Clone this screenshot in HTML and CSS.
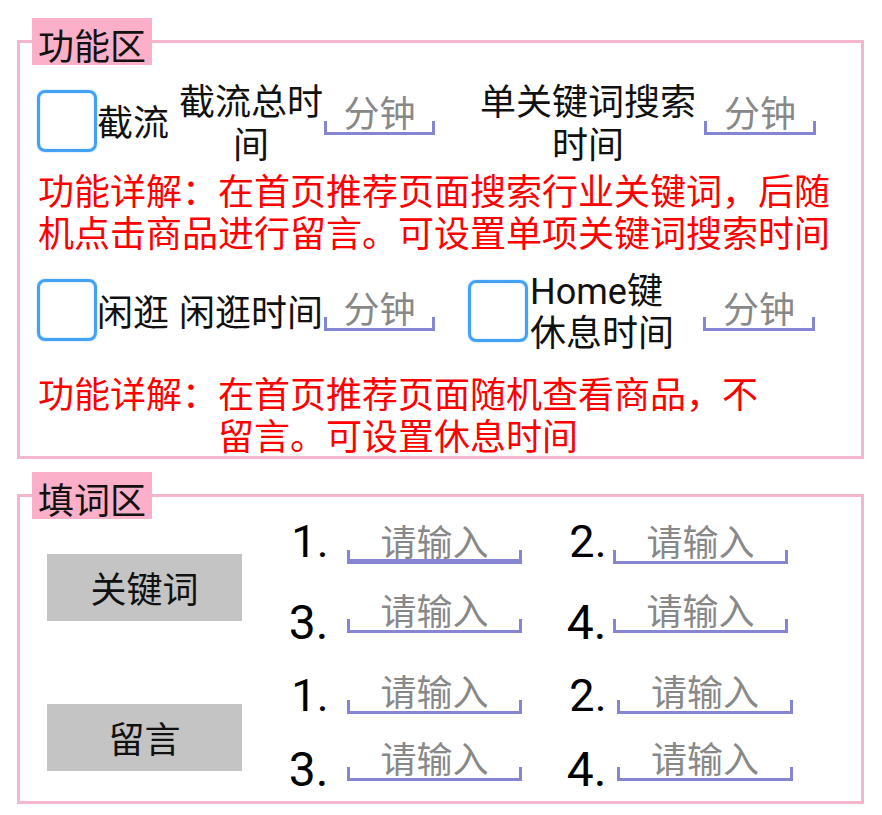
FILE: index.html
```html
<!DOCTYPE html>
<html lang="zh-CN">
<head>
<meta charset="utf-8">
<title>功能区</title>
<link rel="stylesheet" href="styles.css">
</head>
<body>
<div class="page">
  <fieldset class="panel panel-func">
    <legend class="legend">功能区</legend>
    <div class="row row-1">
      <span class="checkbox cb-r1"></span>
      <span class="label lbl-r1">截流</span>
      <span class="label block block-total">截流总时间</span>
      <span class="field field-min fm-r1">分钟</span>
      <span class="label block block-wide">单关键词搜索时间</span>
      <span class="field field-min fm-r1 fm-right">分钟</span>
    </div>
    <p class="desc">功能详解：在首页推荐页面搜索行业关键词，后随机点击商品进行留言。可设置单项关键词搜索时间</p>
    <div class="row row-2">
      <span class="checkbox cb-r2"></span>
      <span class="label lbl-r2">闲逛</span>
      <span class="label block block-total lbl-r2">闲逛时间</span>
      <span class="field field-min fm-r2">分钟</span>
      <span class="checkbox cb-home"></span>
      <span class="label home">Home键休息时间</span>
      <span class="field field-min fm-r2 fm-right2">分钟</span>
    </div>
    <div class="desc desc-split">
      <span class="desc-label">功能详解：</span>
      <span class="desc-body">在首页推荐页面随机查看商品，不留言。可设置休息时间</span>
    </div>
  </fieldset>

  <fieldset class="panel panel-words">
    <legend class="legend">填词区</legend>
    <div class="group">
      <div class="btn">关键词</div>
      <div class="grid grid-1">
        <div class="cell"><span class="num num-a n-g1r1">1.</span><span class="field field-word focused">请输入</span></div>
        <div class="cell"><span class="num num-a n-g1r1">2.</span><span class="field field-word second">请输入</span></div>
        <div class="cell"><span class="num num-b n-g1r2">3.</span><span class="field field-word">请输入</span></div>
        <div class="cell"><span class="num num-b n-g1r2">4.</span><span class="field field-word second">请输入</span></div>
      </div>
    </div>
    <div class="group group-2">
      <div class="btn">留言</div>
      <div class="grid grid-2">
        <div class="cell"><span class="num num-a n-g2r1">1.</span><span class="field field-word">请输入</span></div>
        <div class="cell"><span class="num num-a n-g2r1">2.</span><span class="field field-word second wide2">请输入</span></div>
        <div class="cell"><span class="num num-b n-g2r2">3.</span><span class="field field-word">请输入</span></div>
        <div class="cell"><span class="num num-b n-g2r2">4.</span><span class="field field-word second wide2">请输入</span></div>
      </div>
    </div>
  </fieldset>
</div>
</body>
</html>
```

FILE: styles.css
```css
* { box-sizing: border-box; }
html, body { margin: 0; background: #fff; }
body {
  font-family: "Noto Sans CJK SC", sans-serif;
  font-size: 36px;
  color: #111;
}
.page { padding: 18px 18px 0 17px; }

.panel {
  margin: 0;
  padding: 0 12px 1px;
  border: 3px solid #f3b6cb;
  min-inline-size: 0;
}
.panel + .panel { margin-top: 13px; }
.panel-words { padding-bottom: 20px; }

.legend {
  margin: 0;
  padding: 5px 6px 0;
  height: 47px;
  line-height: 42px;
  background: #fbafc8;
  color: #111;
}

.row { display: flex; align-items: flex-start; }
.row-1 { margin-top: 13px; height: 86px; }
.row-2 { margin-top: 19px; height: 84px; }

.checkbox {
  flex: none;
  width: 60px;
  height: 62px;
  margin-left: 5px;
  border: 3px solid #44a2f5;
  border-radius: 8px;
  box-shadow: 0 0 1.5px rgba(68, 162, 245, 0.7), inset 0 0 1.5px rgba(68, 162, 245, 0.7);
}
.cb-r1 { margin-top: 12px; }
.cb-r2 { margin-top: 8px; }
.cb-home { margin-top: 9px; margin-left: 33px; }

.label { flex: none; line-height: 43px; white-space: nowrap; }
.lbl-r1 { width: 72px; margin-top: 21px; }
.lbl-r2 { margin-top: 18px; }
.row-2 .lbl-r2:first-of-type { width: 72px; }
.block { white-space: normal; text-align: center; }
.block-total { width: 146px; margin-left: 9px; }
.block-wide { width: 218px; margin-left: 44px; }

.home {
  font-family: Roboto, "Noto Sans CJK SC", sans-serif;
  white-space: normal;
  width: 150px;
  margin-left: 2px;
  line-height: 42px;
}

.field {
  --line: #8585d3;
  flex: none;
  height: 45px;
  line-height: 43px;
  text-align: center;
  color: #888;
  white-space: nowrap;
  background:
    linear-gradient(var(--line), var(--line)) left bottom / 3px 14px no-repeat,
    linear-gradient(var(--line), var(--line)) right bottom / 3px 14px no-repeat,
    linear-gradient(var(--line), var(--line)) left bottom / 100% 3px no-repeat;
}
.field.focused {
  background:
    linear-gradient(var(--line), var(--line)) left bottom / 3px 14px no-repeat,
    linear-gradient(var(--line), var(--line)) right bottom / 3px 14px no-repeat,
    linear-gradient(var(--line), var(--line)) left bottom / 100% 5px no-repeat;
}
.field-min { width: 111px; }
.fm-r1 { margin-top: 12px; }
.fm-r2 { margin-top: 15px; }
.fm-right { width: 112px; margin-left: 7px; }
.fm-right2 { width: 112px; margin-left: 23px; }

.desc {
  margin: 4px 0 0 6px;
  color: #f00;
  line-height: 42px;
}
.desc-split { display: flex; margin-top: 16px; }
.desc-label { flex: none; width: 180px; }
.desc-body { flex: none; width: 560px; }

.group { display: flex; align-items: flex-start; }
.group-2 { margin-top: 36px; }

.btn {
  flex: none;
  width: 195px;
  height: 67px;
  line-height: 67px;
  margin: 35px 36.5px 0 15px;
  text-align: center;
  background: #c4c4c4;
  color: #111;
}

.grid {
  display: grid;
  grid-template-columns: max-content max-content;
  grid-template-rows: 45px 45px;
  column-gap: 34.5px;
}
.grid-1 { row-gap: 24px; }
.grid-2 { row-gap: 22px; }

.cell { display: flex; align-items: flex-start; height: 45px; }

.num {
  flex: none;
  width: 50px;
  text-align: right;
  font-family: Roboto, sans-serif;
  color: #000;
}
.num-a { font-size: 45px; line-height: 46px; }
.num-b { font-size: 48px; line-height: 48px; }
.n-g1r1 { margin-top: 0; }
.n-g1r2 { margin-top: 11px; }
.n-g2r1 { margin-top: 4px; }
.n-g2r2 { margin-top: 10px; }

.field-word { width: 175px; margin-left: 18.5px; }
.field-word.second { margin-left: 6.5px; }
.field-word.wide2 { width: 176px; margin-left: 10.5px; }
```
